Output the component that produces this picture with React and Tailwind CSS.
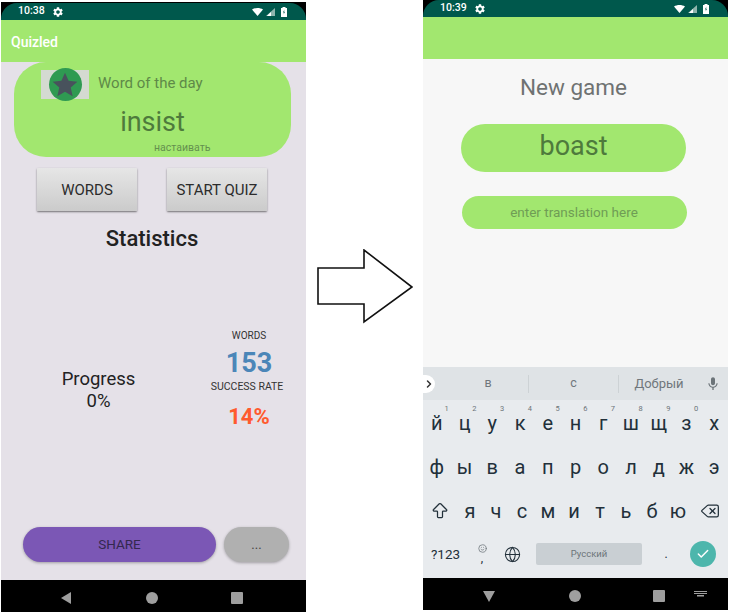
import { Globe, Check, ChevronRight, Delete, ArrowBigUp, Smile } from 'lucide-react'

const ROW_1 = [['й', '1'], ['ц', '2'], ['у', '3'], ['к', '4'], ['е', '5'], ['н', '6'], ['г', '7'], ['ш', '8'], ['щ', '9'], ['з', '0'], ['х', '']]
const ROW_2 = ['ф', 'ы', 'в', 'а', 'п', 'р', 'о', 'л', 'д', 'ж', 'э']
const ROW_3 = ['я', 'ч', 'с', 'м', 'и', 'т', 'ь', 'б', 'ю']

function StatusBar({ time }) {
  return (
    <div className="h-[17px] shrink-0 bg-black">
      <div className="h-full rounded-t-[16px] bg-[#00584c] flex items-center pl-[17px] pr-[19px] text-white">
        <span className="text-[10.5px] font-medium leading-none">{time}</span>
        <svg className="ml-[7px]" width="12" height="12" viewBox="0 0 24 24" fill="white">
          <path d="M19.14 12.94c.04-.3.06-.61.06-.94 0-.32-.02-.64-.07-.94l2.03-1.58a.49.49 0 0 0 .12-.61l-1.92-3.32a.488.488 0 0 0-.59-.22l-2.39.96c-.5-.38-1.03-.7-1.62-.94l-.36-2.54a.484.484 0 0 0-.48-.41h-3.84c-.24 0-.43.17-.47.41l-.36 2.54c-.59.24-1.13.57-1.62.94l-2.39-.96c-.22-.08-.47 0-.59.22L2.74 8.87c-.12.21-.08.47.12.61l2.03 1.58c-.05.3-.09.63-.09.94s.02.64.07.94l-2.03 1.58a.49.49 0 0 0-.12.61l1.92 3.32c.12.22.37.29.59.22l2.39-.96c.5.38 1.03.7 1.62.94l.36 2.54c.05.24.24.41.48.41h3.84c.24 0 .44-.17.47-.41l.36-2.54c.59-.24 1.13-.56 1.62-.94l2.39.96c.22.08.47 0 .59-.22l1.92-3.32c.12-.22.07-.47-.12-.61l-2.01-1.58zM12 15.6c-1.98 0-3.6-1.62-3.6-3.6s1.62-3.6 3.6-3.6 3.6 1.62 3.6 3.6-1.62 3.6-3.6 3.6z" />
        </svg>
        <div className="ml-auto flex items-center gap-[3px]">
          <svg width="11" height="8" viewBox="0 0 11 8">
            <path d="M0 1.5C3 -0.5 8 -0.5 11 1.5L5.5 8Z" fill="white" />
          </svg>
          <svg width="9" height="8" viewBox="0 0 9 8">
            <path d="M9 0V8H0Z" fill="#8fb5ad" />
            <path d="M5 4V8H0.8Z" fill="white" />
          </svg>
          <svg className="ml-[3px]" width="6" height="10" viewBox="0 0 6 10">
            <path d="M1.5 0H4.5V1H6V10H0V1H1.5Z" fill="white" />
            <path d="M3.4 2.5L2 5.4H3L2.6 7.6L4 4.7H3Z" fill="#00584c" />
          </svg>
        </div>
      </div>
    </div>
  )
}

function NavBar({ keyboard, pads }) {
  return (
    <div className={`h-[32px] shrink-0 pt-[4px] bg-black rounded-b-[12px] relative flex items-center justify-between ${pads}`}>
      <svg width="14" height="14" viewBox="0 0 14 14">
        {keyboard
          ? <path d="M1 2H13L7 13Z" fill="#9e9e9e" />
          : <path d="M12 1V13L2 7Z" fill="#9e9e9e" />}
      </svg>
      <div className="w-[12px] h-[12px] rounded-full bg-[#9e9e9e]" />
      <div className="w-[12px] h-[12px] rounded-[1px] bg-[#9e9e9e]" />
      {keyboard && (
        <svg className="absolute right-[21px] top-[13px]" width="13" height="6" viewBox="0 0 13 6" fill="#9e9e9e">
          <path d="M0 0H13V1H0ZM0 2H13V3H0ZM3 4H10V5.5H3Z" />
        </svg>
      )}
    </div>
  )
}

function GrayButton({ children }) {
  return (
    <div className="w-[100px] h-[43px] pt-[2px] flex items-center justify-center rounded-[1px] bg-gradient-to-b from-[#e6e6e6] to-[#cbcbcb] shadow-[0_1px_2px_rgba(0,0,0,0.5)] text-[15px] text-[#2c2c2c]">
      {children}
    </div>
  )
}

function HomeScreen() {
  return (
    <div className="w-[305px] ml-px mt-[2px] h-[610px] flex flex-col bg-black">
      <div className="h-px bg-black shrink-0" />
      <StatusBar time="10:38" />
      <div className="h-[42px] shrink-0 bg-[#a2e76f] flex items-center pl-[10px] pt-[2px] text-white text-[14px] font-medium">
        Quizled
      </div>
      <div className="flex-1 bg-[#e5e1e8] flex flex-col">
        <div className="ml-[13px] w-[277px] h-[95px] rounded-[32px] bg-[#a2e76f] flex flex-col shrink-0">
          <div className="flex items-center pl-[27px] h-[46px]">
            <div className="w-[48px] h-[29px] bg-[#d4dad1] flex items-center justify-center -mt-[2px]">
              <div className="w-[33px] h-[33px] rounded-full bg-[#2f9a52] flex items-center justify-center shrink-0">
                <svg width="28" height="27" viewBox="0 0 24 24" fill="#48525c">
                  <path d="M12 1.5l3.2 7.2 7.8.8-5.9 5.2 1.7 7.7L12 18.4l-6.8 4 1.7-7.7L1 9.5l7.8-.8z" />
                </svg>
              </div>
            </div>
            <span className="ml-[9px] -mt-[4px] text-[15px] text-[#5e8a48]">Word of the day</span>
          </div>
          <div className="text-center text-[27px] leading-[34px] -mt-[3px] text-[#4e7a3c]">insist</div>
          <div className="pl-[140px] text-[10.5px] leading-[13px] mt-[2px] text-[#64904e]">настаивать</div>
        </div>

        <div className="flex gap-[30px] pl-[36px] mt-[11px]">
          <GrayButton>WORDS</GrayButton>
          <GrayButton>START QUIZ</GrayButton>
        </div>

        <div className="text-center text-[22px] leading-[26px] font-medium text-[#222] mt-[15px] pr-[3px]">Statistics</div>

        <div className="flex mt-[78px]">
          <div className="w-[195px] pt-[38px] text-center text-[18.5px] leading-[22px] text-[#222]">
            <div>Progress</div>
            <div>0%</div>
          </div>
          <div className="w-[110px] flex flex-col items-center pr-[7px]">
            <div className="text-[10px] leading-[12px] text-[#333] pl-[3px]">WORDS</div>
            <div className="text-[27px] leading-[32px] font-bold text-[#4b86b8] mt-[5px] pl-[3px]">153</div>
            <div className="text-[10.5px] leading-[12px] text-[#333] mt-[2px] -ml-[1px]">SUCCESS RATE</div>
            <div className="text-[22px] leading-[28px] font-bold text-[#ff5a2e] mt-[10px] pl-[3px]">14%</div>
          </div>
        </div>

        <div className="flex gap-[8px] pl-[22px] mt-auto mb-[18px]">
          <div className="w-[193px] h-[35px] rounded-[18px] bg-[#7b57b5] shadow-[0_1px_3px_rgba(0,0,0,0.3)] flex items-center justify-center text-[13.5px] text-[#33284f]">
            SHARE
          </div>
          <div className="w-[65px] h-[35px] rounded-[18px] bg-[#b0b0b0] shadow-[0_1px_3px_rgba(0,0,0,0.3)] flex items-center justify-center text-[13px] text-[#444]">
            ...
          </div>
        </div>
      </div>
      <NavBar pads="pl-[58px] pr-[63px]" />
    </div>
  )
}

function Key({ letter, hint }) {
  return (
    <div className="relative h-full flex items-center justify-center text-[20px] leading-[14px] text-[#22303a]">
      {letter}
      {hint && <span className="absolute top-[5px] right-[2px] text-[7.5px] leading-none text-[#6c7479]">{hint}</span>}
    </div>
  )
}

function Keyboard() {
  return (
    <div className="h-[211px] shrink-0 bg-[#e8ebee] flex flex-col">
      <div className="h-[33px] bg-[#dfe3e6] flex items-center text-[#70777c] shrink-0">
        <div className="w-[12px] h-[18px] rounded-r-full bg-white flex items-center justify-center">
          <ChevronRight className="w-[12px] h-[12px] text-[#333]" strokeWidth={3} />
        </div>
        <div className="w-[93px] text-center text-[12.5px] pl-[13px]">в</div>
        <div className="w-px h-[18px] bg-[#cdd2d5]" />
        <div className="w-[89px] text-center text-[12.5px]">с</div>
        <div className="w-px h-[18px] bg-[#cdd2d5]" />
        <div className="w-[80px] text-center text-[13px]">Добрый</div>
        <svg className="ml-[6px]" width="16" height="16" viewBox="0 0 24 24" fill="#6c7479">
          <path d="M12 14c1.66 0 3-1.34 3-3V5c0-1.66-1.34-3-3-3S9 3.34 9 5v6c0 1.66 1.34 3 3 3zm5.3-3c0 3-2.54 5.1-5.3 5.1S6.7 14 6.7 11H5c0 3.41 2.72 6.23 6 6.72V21h2v-3.28c3.28-.48 6-3.3 6-6.72h-1.7z" />
        </svg>
      </div>
      <div className="grid grid-cols-11 h-[45px]">
        {ROW_1.map(([k, h]) => <Key key={k} letter={k} hint={h} />)}
      </div>
      <div className="grid grid-cols-11 h-[44px]">
        {ROW_2.map(k => <Key key={k} letter={k} />)}
      </div>
      <div className="flex h-[43px]">
        <div className="w-[34px] flex items-center justify-center">
          <ArrowBigUp className="w-[20px] h-[20px] text-[#22303a]" strokeWidth={1.5} />
        </div>
        <div className="flex-1 grid grid-cols-9">
          {ROW_3.map(k => <Key key={k} letter={k} />)}
        </div>
        <div className="w-[37px] flex items-center justify-center">
          <Delete className="w-[20px] h-[20px] text-[#22303a]" strokeWidth={1.5} />
        </div>
      </div>
      <div className="flex items-center h-[44px] text-[#22303a]">
        <div className="w-[44px] text-center text-[13.5px] pl-[1px]">?123</div>
        <div className="w-[30px] flex flex-col items-center text-[12px] leading-none">
          <Smile className="w-[9px] h-[9px] text-[#6c7479]" />
          <span className="-mt-[1px]">,</span>
        </div>
        <Globe className="ml-[7px] w-[17px] h-[17px]" strokeWidth={1.5} />
        <div className="ml-[15px] w-[106px] h-[22px] rounded-[2px] bg-[#c9cfd3] flex items-center justify-center text-[9.5px] text-[#6c7479]">
          Русский
        </div>
        <div className="w-[48px] text-center text-[12px]">.</div>
        <div className="w-[26px] h-[26px] rounded-full bg-[#4db6ac] flex items-center justify-center">
          <Check className="w-[14px] h-[14px] text-white" strokeWidth={2.5} />
        </div>
      </div>
    </div>
  )
}

function GameScreen() {
  return (
    <div className="w-[305px] h-[610px] flex flex-col bg-black">
      <StatusBar time="10:39" />
      <div className="h-[42px] shrink-0 bg-[#a2e76f]" />
      <div className="flex-1 bg-[#f7f7f7] flex flex-col items-center pr-[4px]">
        <div className="text-[22.5px] leading-[28px] text-[#6f7272] mt-[14px]">New game</div>
        <div className="w-[225px] h-[48px] rounded-[24px] bg-[#a2e76f] flex items-center justify-center text-[27px] text-[#4e7a3c] mt-[23px] pb-[3px]">
          boast
        </div>
        <div className="w-[225px] h-[33px] rounded-[17px] bg-[#a2e76f] flex items-center justify-center text-[13.5px] text-[#6f9d55] mt-[24px] ml-px">
          enter translation here
        </div>
      </div>
      <Keyboard />
      <NavBar keyboard pads="pl-[59px] pr-[63px]" />
    </div>
  )
}

export default function App() {
  return (
    <div className="w-[733px] h-[614px] bg-white flex font-['Roboto',sans-serif] overflow-hidden">
      <HomeScreen />
      <div className="w-[117px] flex justify-center pt-[249px] shrink-0">
        <svg width="97" height="75" viewBox="0 0 97 75">
          <path d="M2 19H48V1L96 38L48 73V55H2Z" fill="white" stroke="#111" strokeWidth="1.6" />
        </svg>
      </div>
      <GameScreen />
    </div>
  )
}
